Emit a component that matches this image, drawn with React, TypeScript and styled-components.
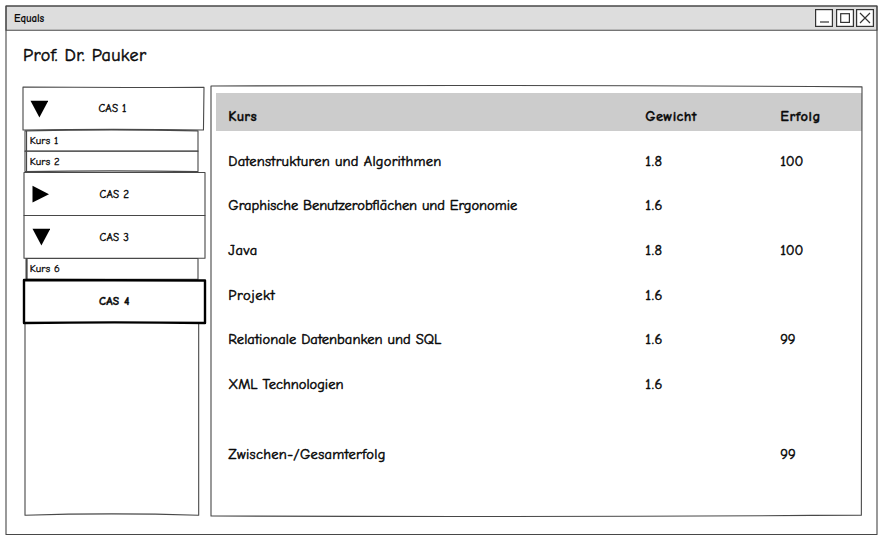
import React from "react";
import styled, { createGlobalStyle, css } from "styled-components";

const GlobalStyle = createGlobalStyle`
  *, *::before, *::after { box-sizing: border-box; }
  body {
    margin: 0;
    background: #fff;
    color: #0a0a0a;
    font-family: "Comic Sans MS", "Comic Neue", "Open Sans", "Noto Sans", sans-serif;
    font-weight: 500;
    font-variant-ligatures: none;
    -webkit-text-stroke: 0.5px #0a0a0a;
  }
`;

const ink = "#484848";

const Screen = styled.div`
  width: 884px;
  height: 540px;
  padding: 6px 7px 5px 6px;
  overflow: hidden;
`;

const Sketched = styled.div`
  position: relative;
`;

const Lines = styled.svg`
  position: absolute;
  inset: 0;
  width: 100%;
  height: 100%;
  overflow: visible;
  pointer-events: none;
  fill: none;
  stroke-linejoin: round;

  path { vector-effect: non-scaling-stroke; }
`;

/* Hand-drawn outline stretched over its parent box. */
function Outline({ d = "M0 0H100V100H0Z", width = 1.1, color = ink }: { d?: string; width?: number; color?: string }) {
  return (
    <Lines viewBox="0 0 100 100" preserveAspectRatio="none" aria-hidden="true">
      <path d={d} stroke={color} strokeWidth={width} />
    </Lines>
  );
}

const Window = styled(Sketched)`
  display: flex;
  flex-direction: column;
  width: 871px;
  height: 528.5px;
`;

const TitleBar = styled(Sketched)`
  flex: none;
  display: flex;
  align-items: center;
  height: 24.3px;
  padding: 0 3px 0 8px;
  background: #ddd;
`;

const WindowTitle = styled.span`
  flex: 1;
  padding-top: 1px;
  font-size: 11px;
  font-weight: 700;
  line-height: 14px;
  letter-spacing: -0.1px;
  -webkit-text-stroke-width: 0.1px;
`;

const WindowButtons = styled.div`
  display: flex;
  gap: 2.5px;
`;

const WindowButton = styled.svg`
  display: block;
  width: 18px;
  height: 18px;
  fill: none;
  stroke: #333;
  stroke-width: 1.2;

  rect:first-child { fill: #fff; }
`;

const Heading = styled.h1`
  flex: none;
  margin: 0;
  padding: 13.7px 0 0 17px;
  height: 56.2px;
  font-size: 18px;
  font-weight: 500;
  line-height: 24px;
  letter-spacing: 0.45px;
`;

const Body = styled.div`
  flex: 1;
  display: flex;
  align-items: flex-start;
  padding-left: 16.5px;
`;

const Sidebar = styled.nav`
  flex: none;
  width: 188.5px;
  padding-top: 0.5px;
`;

const Group = styled(Sketched)<{ $first?: boolean; $active?: boolean }>`
  display: grid;
  grid-template-columns: 34px 112px 1fr;
  align-items: center;
  width: 181px;
  height: 43px;
  padding-top: 1px;
  margin-left: ${(p) => (p.$first ? 0 : 1.8)}px;
  font-size: 11px;
  line-height: 14px;
  letter-spacing: 0.2px;
  text-align: center;
  -webkit-text-stroke-width: 0.4px;
  ${(p) =>
    p.$active &&
    css`
      z-index: 1;
      font-weight: 700;
      font-size: 11.5px;
      letter-spacing: 0.35px;
    `}
`;

const Arrow = styled.svg`
  display: block;
  width: 18px;
  height: 18px;
  margin-left: 7.7px;
  fill: #000;
`;

const GroupName = styled.span`
  grid-column: 2;
  padding-top: 1px;
`;

const Courses = styled.div`
  width: 173px;
  margin-left: 2.7px;
`;

const Course = styled(Sketched)`
  height: 21.25px;
  padding-left: 4.5px;
  font-size: 10.7px;
  line-height: 22px;
  letter-spacing: 0.1px;
  -webkit-text-stroke-width: 0.35px;
`;

const EmptyArea = styled(Sketched)`
  width: 173.7px;
  height: 192.2px;
  margin-left: 2.2px;
`;

const Panel = styled(Sketched)`
  flex: none;
  width: 651px;
  height: 430px;
  padding: 6.5px 0 0 5px;
`;

const Row = styled.div<{ $header?: boolean; $total?: boolean }>`
  display: grid;
  grid-template-columns: 417px 135px 1fr;
  align-items: center;
  height: 44.7px;
  padding: 1.5px 0 0 12.3px;
  font-size: 14.5px;
  line-height: 20px;
  ${(p) =>
    p.$header &&
    css`
      height: 38.5px;
      padding-top: 10.5px;
      margin-bottom: 7px;
      background: #ccc;
      font-weight: 700;
      -webkit-text-stroke-width: 0.3px;
    `}
  ${(p) => p.$total && css`margin-top: 25px;`}
`;

const Cell = styled.span<{ $track?: number }>`
  white-space: nowrap;
  letter-spacing: ${(p) => p.$track ?? 0}px;
`;

type Result = { name: string; weight?: string; score?: string; track?: number };

const results: Result[] = [
  { name: "Datenstrukturen und Algorithmen", weight: "1.8", score: "100", track: 0.22 },
  { name: "Graphische Benutzerobflächen und Ergonomie", weight: "1.6", track: -0.03 },
  { name: "Java", weight: "1.8", score: "100", track: 0.5 },
  { name: "Projekt", weight: "1.6", track: 0.55 },
  { name: "Relationale Datenbanken und SQL", weight: "1.6", score: "99", track: 0.05 },
  { name: "XML Technologien", weight: "1.6", track: -0.02 },
];

const Down = () => (
  <Arrow viewBox="0 0 18 18"><path d="M0.5 0.8H18.2L9.4 17.5Z" /></Arrow>
);

const Right = () => (
  <Arrow viewBox="0 0 18 18"><path d="M0.5 0.8V17.5L17 9.2Z" /></Arrow>
);

export default function App() {
  return (
    <>
      <GlobalStyle />
      <Screen>
        <Window>
          <TitleBar>
            <WindowTitle>Equals</WindowTitle>
            <WindowButtons>
              <WindowButton viewBox="0 0 18 18"><rect x=".6" y=".6" width="16.8" height="16.8" /><path d="M5 13H14" /></WindowButton>
              <WindowButton viewBox="0 0 18 18"><rect x=".6" y=".6" width="16.8" height="16.8" /><rect x="4.7" y="4.7" width="8.7" height="8.7" /></WindowButton>
              <WindowButton viewBox="0 0 18 18"><rect x=".6" y=".6" width="16.8" height="16.8" /><path d="M4 4L14 14M14 4L4 14" /></WindowButton>
            </WindowButtons>
            <Outline />
          </TitleBar>
          <Heading>Prof. Dr. Pauker</Heading>
          <Body>
            <Sidebar>
              <Group $first>
                <Down /><GroupName>CAS 1</GroupName>
                <Outline d="M0 0Q50 2 100 0.5L99.7 100Q50 97 0 100Z" />
              </Group>
              <Courses>
                <Course>Kurs 1<Outline d="M0 4Q50 -5 100 4V100H0ZM0.9 4V100" /></Course>
                <Course>Kurs 2<Outline d="M0 0H100V97Q50 90 0 97ZM0.9 0V97" /></Course>
              </Courses>
              <Group>
                <Right /><GroupName>CAS 2</GroupName>
                <Outline d="M0 1H100V101H0Z" />
              </Group>
              <Group>
                <Down /><GroupName>CAS 3</GroupName>
                <Outline d="M0 1H100V100.5H0Z" />
              </Group>
              <Courses>
                <Course>Kurs 6<Outline d="M0.6 2H100V100H0.6ZM1.2 0V100" /></Course>
              </Courses>
              <Group $active>
                <GroupName>CAS 4</GroupName>
                <Outline width={2.4} color="#000" d="M0 0L100 1V100Q50 97 0 100Z" />
              </Group>
              <EmptyArea><Outline d="M0 0V100Q50 98.6 100 100V0" /></EmptyArea>
            </Sidebar>
            <Panel>
              <Row $header>
                <Cell $track={0.2}>Kurs</Cell><Cell $track={0.35}>Gewicht</Cell><Cell $track={0.5}>Erfolg</Cell>
              </Row>
              {results.map((r) => (
                <Row key={r.name}>
                  <Cell $track={r.track}>{r.name}</Cell><Cell $track={0.6}>{r.weight}</Cell><Cell $track={-0.2}>{r.score}</Cell>
                </Row>
              ))}
              <Row $total>
                <Cell $track={0.3}>Zwischen-/Gesamterfolg</Cell><Cell /><Cell>99</Cell>
              </Row>
              <Outline d="M0 0Q50 -0.3 100 0.2L99.9 99.8Q50 100.3 0 100Z" />
            </Panel>
          </Body>
          <Outline />
        </Window>
      </Screen>
    </>
  );
}
